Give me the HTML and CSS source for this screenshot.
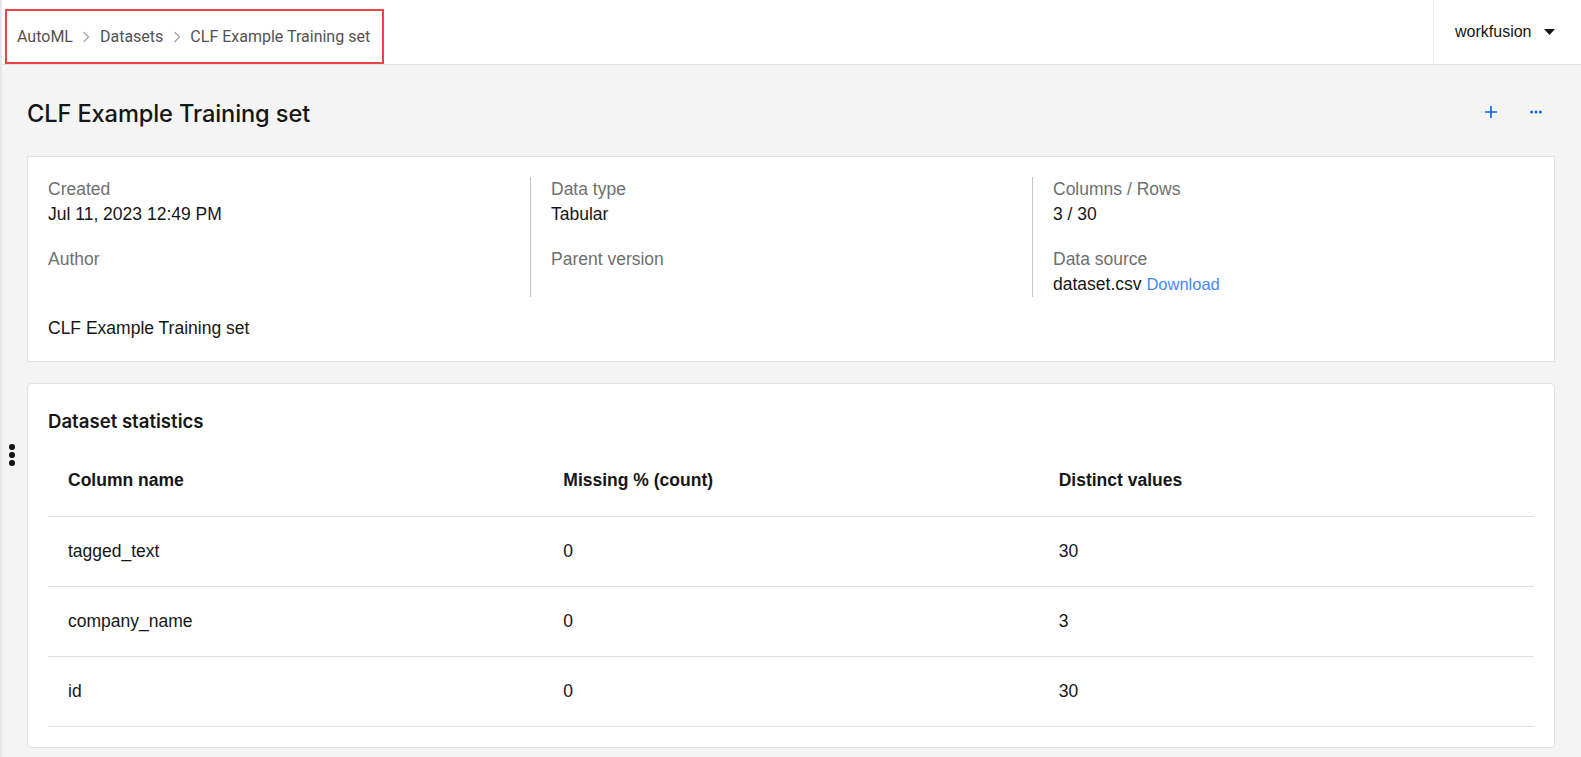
FILE: index.html
```html
<!DOCTYPE html>
<html>

<head>
  <title>CLF Example Training set</title>
  <meta charset="utf-8">
  <link rel="stylesheet" href="styles.css">
</head>

<body>
  <header class="topbar">
    <nav class="crumbs">
      <a href="#">AutoML</a>
      <svg class="chev" width="8" height="12" viewBox="0 0 8 12"><path d="M1.5 1l5 5-5 5" fill="none" stroke="#a8a8a8" stroke-width="1.4"/></svg>
      <a href="#">Datasets</a>
      <svg class="chev" width="8" height="12" viewBox="0 0 8 12"><path d="M1.5 1l5 5-5 5" fill="none" stroke="#a8a8a8" stroke-width="1.4"/></svg>
      <span>CLF Example Training set</span>
    </nav>
    <div class="account">
      <span>workfusion</span>
      <svg width="11" height="6" viewBox="0 0 11 6"><path d="M0 0h11L5.5 6z" fill="#161616"/></svg>
    </div>
  </header>

  <main class="page">
    <div class="handle">
      <i></i><i></i><i></i>
    </div>

    <div class="page-head">
      <h1>CLF Example Training set</h1>
      <div class="actions">
        <button class="icon-btn" title="Add">
          <svg width="12" height="12" viewBox="0 0 12 12"><path d="M6 0v12M0 6h12" stroke="#0f62fe" stroke-width="1.6"/></svg>
        </button>
        <button class="icon-btn" title="More">
          <svg width="12" height="4" viewBox="0 0 12 4"><circle cx="1.6" cy="2" r="1.5" fill="#0f62fe"/><circle cx="6" cy="2" r="1.5" fill="#0f62fe"/><circle cx="10.4" cy="2" r="1.5" fill="#0f62fe"/></svg>
        </button>
      </div>
    </div>

    <section class="card info">
      <div class="cols">
        <div class="col">
          <div class="field">
            <div class="label">Created</div>
            <div class="value">Jul 11, 2023 12:49 PM</div>
          </div>
          <div class="field">
            <div class="label">Author</div>
            <div class="value"></div>
          </div>
        </div>
        <div class="col">
          <div class="field">
            <div class="label">Data type</div>
            <div class="value">Tabular</div>
          </div>
          <div class="field">
            <div class="label">Parent version</div>
            <div class="value"></div>
          </div>
        </div>
        <div class="col">
          <div class="field">
            <div class="label">Columns / Rows</div>
            <div class="value">3 / 30</div>
          </div>
          <div class="field">
            <div class="label">Data source</div>
            <div class="value">dataset.csv <a href="#" class="link">Download</a></div>
          </div>
        </div>
      </div>
      <p class="desc">CLF Example Training set</p>
    </section>

    <section class="card stats">
      <h2>Dataset statistics</h2>
      <table>
        <thead>
          <tr>
            <th>Column name</th>
            <th>Missing % (count)</th>
            <th>Distinct values</th>
          </tr>
        </thead>
        <tbody>
          <tr>
            <td>tagged_text</td>
            <td>0</td>
            <td>30</td>
          </tr>
          <tr>
            <td>company_name</td>
            <td>0</td>
            <td>3</td>
          </tr>
          <tr>
            <td>id</td>
            <td>0</td>
            <td>30</td>
          </tr>
        </tbody>
      </table>
    </section>
  </main>
</body>

</html>
```

FILE: styles.css
```css
* {
  padding: 0;
  margin: 0;
  box-sizing: border-box;
}

body {
  background: #f4f4f4;
  border-left: 2px solid #e6e6e6;
  font-family: "Liberation Sans", Arial, sans-serif;
  font-size: 17.5px;
  color: #161616;
  min-height: 757px;
}

a {
  text-decoration: none;
  color: inherit;
}

.topbar {
  height: 65px;
  background: #fff;
  border-bottom: 1px solid #e0e0e0;
  display: flex;
  justify-content: space-between;
}

.crumbs {
  margin: 9px 0 0 3px;
  height: 55px;
  padding: 0 12px 0 10px;
  border: 2px solid #ef4444;
  display: flex;
  align-items: center;
  gap: 9.5px;
  font-family: Roboto, "Liberation Sans", sans-serif;
  font-size: 16px;
  color: #525252;
}

.account {
  width: 148px;
  border-left: 1px solid #e6e6e6;
  display: flex;
  align-items: center;
  padding-left: 21px;
  gap: 13px;
  font-size: 16px;
  color: #161616;
}

.page {
  padding: 0 26px 0 25px;
  position: relative;
}

.page-head {
  height: 91px;
  display: flex;
  align-items: center;
  justify-content: space-between;
  padding-top: 6px;
}

h1 {
  font-family: Inter, Lato, sans-serif;
  font-weight: 500;
  font-size: 23.6px;
  letter-spacing: -0.1px;
  color: #161616;
}

.actions {
  display: flex;
  gap: 9px;
  margin-right: 1px;
  margin-top: -4px;
}

.icon-btn {
  width: 36px;
  height: 36px;
  border: 0;
  background: none;
  display: flex;
  align-items: center;
  justify-content: center;
}

.card {
  background: #fff;
  border: 1px solid #e0e0e0;
}

.info {
  padding: 20px 20px 20px 0;
}

.cols {
  display: grid;
  grid-template-columns: 1fr 1fr 1fr;
}

.col {
  padding-left: 20px;
}

.col + .col {
  border-left: 1px solid #c6c6c6;
}

.field + .field {
  margin-top: 20px;
}

.label,
.value {
  line-height: 25px;
  height: 25px;
}

.label {
  color: #6f6f6f;
}

.link {
  color: #4589ff;
  font-size: 16.5px;
}

.desc {
  padding-left: 20px;
  margin-top: 19px;
  line-height: 25px;
}

.stats {
  margin-top: 21px;
  border-radius: 4px;
  padding: 25px 20px 20px 20px;
}

h2 {
  font-family: Inter, Lato, sans-serif;
  font-weight: 600;
  font-size: 18.6px;
  line-height: 24px;
  color: #161616;
}

table {
  width: 100%;
  margin-top: 13px;
  border-collapse: collapse;
  table-layout: fixed;
}

th,
td {
  text-align: left;
  padding-left: 20px;
  height: 70px;
  border-bottom: 1px solid #e0e0e0;
}

th {
  font-weight: bold;
}

.handle {
  position: absolute;
  left: 7px;
  top: 379px;
  display: flex;
  flex-direction: column;
  gap: 2.5px;
}

.handle i {
  display: block;
  width: 5.5px;
  height: 5.5px;
  border-radius: 50%;
  background: #161616;
}
```
